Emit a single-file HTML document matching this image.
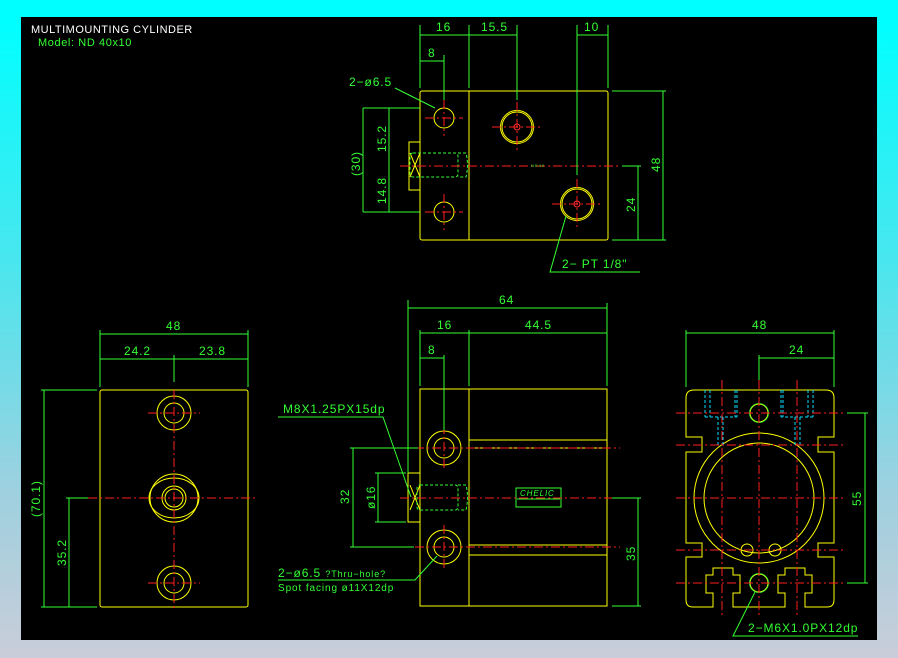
<!DOCTYPE html>
<html><head><meta charset="utf-8"><style>
html,body{margin:0;padding:0}
body{width:898px;height:658px;background:linear-gradient(180deg,#00ffff 0%,#00ffff 3%,#4ae6ee 40%,#9fd0df 75%,#c9cdd9 100%);position:relative;overflow:hidden}
svg{position:absolute;left:0;top:0}
text{font-family:"Liberation Sans",sans-serif;font-size:12px;fill:#33ff33;letter-spacing:0.9px}
</style></head><body>
<svg width="898" height="658" viewBox="0 0 898 658">
<rect x="21" y="17" width="856" height="623" fill="#000"/>
<text x="31" y="33" style="fill:#fff;font-size:11px;letter-spacing:0.5px">MULTIMOUNTING  CYLINDER</text>
<text x="38" y="46" style="font-size:11px;letter-spacing:0.6px">Model:  ND  40x10</text>

<!-- ===== TOP VIEW ===== -->
<g fill="none" stroke="#ffff00" stroke-width="1">
<rect x="420" y="91" width="188" height="149" rx="2"/>
<line x1="469" y1="91" x2="469" y2="240"/>
<circle cx="444" cy="118" r="10"/>
<circle cx="444" cy="212" r="10"/>
<circle cx="517" cy="127" r="15"/><circle cx="517" cy="127" r="16.5"/><circle cx="517" cy="127" r="3" stroke="#ff3030"/>
<circle cx="577" cy="204" r="15"/><circle cx="577" cy="204" r="16.5"/><circle cx="577" cy="204" r="3" stroke="#ff3030"/>
<rect x="409" y="142" width="11" height="48"/>
<path d="M410,153 L420,177 M410,177 L420,153"/>
</g>
<g fill="none" stroke="#33ff33" stroke-dasharray="3,2">
<rect x="410" y="153" width="48" height="24" rx="3"/>
<path d="M458,153 H466 Q469,165 466,177 H458"/>
</g>
<g stroke="#ff2020" stroke-dasharray="9,3,2,3" fill="none">
<line x1="400" y1="166" x2="620" y2="166"/>
<line x1="425" y1="118" x2="463" y2="118"/><line x1="444" y1="100" x2="444" y2="136"/>
<line x1="425" y1="212" x2="463" y2="212"/><line x1="444" y1="194" x2="444" y2="230"/>
<line x1="492" y1="127" x2="542" y2="127"/><line x1="517" y1="102" x2="517" y2="152"/>
<line x1="552" y1="204" x2="602" y2="204"/><line x1="577" y1="179" x2="577" y2="229"/>
</g>
<g stroke="#33ff33" fill="none">
<line x1="420" y1="25" x2="420" y2="88"/><line x1="469" y1="25" x2="469" y2="88"/>
<line x1="517" y1="25" x2="517" y2="100"/><line x1="577" y1="25" x2="577" y2="175"/><line x1="608" y1="25" x2="608" y2="88"/>
<line x1="420" y1="35" x2="517" y2="35"/><line x1="577" y1="35" x2="608" y2="35"/>
<line x1="420" y1="61" x2="444" y2="61"/><line x1="444" y1="55" x2="444" y2="100"/>
<line x1="363" y1="108" x2="420" y2="108"/><line x1="363" y1="212" x2="420" y2="212"/>
<line x1="363" y1="108" x2="363" y2="212"/><line x1="389" y1="108" x2="389" y2="212"/>
<line x1="612" y1="91" x2="666" y2="91"/><line x1="612" y1="240" x2="666" y2="240"/>
<line x1="622" y1="166" x2="641" y2="166"/>
<line x1="663" y1="91" x2="663" y2="240"/><line x1="638" y1="166" x2="638" y2="240"/>
<polyline points="395,88 435,108"/>
<polyline points="640,272 550,272 566,216"/>
</g>
<text x="436" y="31">16</text><text x="481" y="31">15.5</text><text x="584" y="31">10</text>
<text x="428" y="57">8</text>
<text x="349" y="86">2−ø6.5</text>
<text x="562" y="268">2−  PT 1/8"</text>
<text transform="translate(360,176) rotate(-90)">(30)</text>
<text transform="translate(386,152) rotate(-90)">15.2</text>
<text transform="translate(386,204) rotate(-90)">14.8</text>
<text transform="translate(660,172) rotate(-90)">48</text>
<text transform="translate(635,212) rotate(-90)">24</text>
<text x="531" y="167" style="font-size:4px">ND40</text>

<!-- ===== FRONT VIEW ===== -->
<g fill="none" stroke="#ffff00">
<rect x="420" y="389" width="187" height="217"/>
<line x1="469" y1="389" x2="469" y2="606"/>
<circle cx="444" cy="448" r="17"/><circle cx="444" cy="448" r="10"/>
<circle cx="444" cy="547" r="17"/><circle cx="444" cy="547" r="10"/>
<line x1="469" y1="440" x2="607" y2="440"/><line x1="469" y1="448" x2="607" y2="448"/>
<line x1="469" y1="545" x2="607" y2="545"/><line x1="469" y1="555" x2="607" y2="555"/>
<rect x="408" y="473" width="12" height="49"/>
<path d="M410,485 L420,510 M410,510 L420,485"/>
</g>
<g fill="none" stroke="#33ff33" stroke-dasharray="3,2">
<rect x="417" y="485" width="41" height="25" rx="3"/>
<path d="M458,485 H466 Q469,497 466,510 H458"/>
</g>
<rect x="516" y="488" width="45" height="19" fill="none" stroke="#33ff33"/>
<text x="520" y="496" style="font-size:8px;font-style:italic">CHELIC</text>
<line x1="517" y1="499" x2="560" y2="499" stroke="#33ff33"/>
<g stroke="#ff2020" stroke-dasharray="9,3,2,3" fill="none">
<line x1="400" y1="498" x2="620" y2="498"/>
<line x1="415" y1="448" x2="620" y2="448"/><line x1="444" y1="425" x2="444" y2="470"/>
<line x1="415" y1="547" x2="620" y2="547"/><line x1="444" y1="525" x2="444" y2="570"/>
</g>
<g stroke="#33ff33" fill="none">
<line x1="408" y1="300" x2="408" y2="473"/><line x1="420" y1="330" x2="420" y2="386"/>
<line x1="469" y1="330" x2="469" y2="386"/><line x1="607" y1="303" x2="607" y2="386"/>
<line x1="444" y1="355" x2="444" y2="430"/>
<line x1="408" y1="308" x2="607" y2="308"/><line x1="420" y1="333" x2="607" y2="333"/>
<line x1="420" y1="358" x2="444" y2="358"/>
<line x1="350" y1="448" x2="418" y2="448"/><line x1="350" y1="547" x2="414" y2="547"/>
<line x1="353" y1="448" x2="353" y2="547"/>
<line x1="375" y1="473" x2="406" y2="473"/><line x1="375" y1="522" x2="406" y2="522"/>
<line x1="378" y1="473" x2="378" y2="522"/>
<line x1="612" y1="498" x2="641" y2="498"/><line x1="612" y1="606" x2="641" y2="606"/>
<line x1="638" y1="498" x2="638" y2="606"/>
<polyline points="278,417 383,417 411,497"/>
<polyline points="278,580 415,580 437,556"/>
</g>
<text x="499" y="304">64</text><text x="437" y="329">16</text><text x="525" y="329">44.5</text>
<text x="428" y="354">8</text>
<text x="283" y="413">M8X1.25PX15dp</text>
<text x="278" y="577">2−ø6.5 <tspan style="font-size:9px">?Thru−hole?</tspan></text>
<text x="278" y="591" style="font-size:10px">Spot facing  ø11X12dp</text>
<text transform="translate(349,504) rotate(-90)">32</text>
<text transform="translate(375,509) rotate(-90)">ø16</text>
<text transform="translate(635,561) rotate(-90)">35</text>

<!-- ===== LEFT VIEW ===== -->
<g fill="none" stroke="#ffff00">
<rect x="100" y="390" width="148" height="217" rx="2"/>
<circle cx="174" cy="413" r="17"/><circle cx="174" cy="413" r="10"/>
<circle cx="174" cy="583" r="17"/><circle cx="174" cy="583" r="10"/>
<circle cx="174" cy="498" r="24"/><ellipse cx="174" cy="498" rx="25" ry="20"/>
<circle cx="174" cy="498" r="12"/><circle cx="174" cy="498" r="9"/>
</g>
<g stroke="#ff2020" stroke-dasharray="9,3,2,3" fill="none">
<line x1="88" y1="498" x2="258" y2="498"/><line x1="174" y1="390" x2="174" y2="610"/>
<line x1="148" y1="413" x2="200" y2="413"/><line x1="148" y1="583" x2="200" y2="583"/>
</g>
<g stroke="#33ff33" fill="none">
<line x1="100" y1="330" x2="100" y2="387"/><line x1="248" y1="330" x2="248" y2="387"/>
<line x1="174" y1="355" x2="174" y2="382"/>
<line x1="100" y1="334" x2="248" y2="334"/><line x1="100" y1="359" x2="248" y2="359"/>
<line x1="41" y1="390" x2="97" y2="390"/><line x1="41" y1="607" x2="97" y2="607"/>
<line x1="44" y1="390" x2="44" y2="607"/>
<line x1="66" y1="498" x2="88" y2="498"/><line x1="69" y1="498" x2="69" y2="607"/>
</g>
<text x="166" y="330">48</text><text x="124" y="355">24.2</text><text x="199" y="355">23.8</text>
<text transform="translate(40,517) rotate(-90)">(70.1)</text>
<text transform="translate(66,566) rotate(-90)">35.2</text>

<!-- ===== RIGHT VIEW ===== -->
<g fill="none" stroke="#ffff00">
<path d="M694,390 H826 Q834,390 834,398 V437 H818 V452 H834 V543 H818 V557 H834 V600 Q834,607 827,607 H805 V593 H812 V575 H805 V568 H785 V575 H778 V593 H785 V607 H733 V593 H740 V575 H733 V568 H713 V575 H706 V593 H713 V607 H693 Q686,607 686,600 V557 H702 V543 H686 V452 H702 V437 H686 V398 Q686,390 694,390 Z"/>
<circle cx="759" cy="498" r="65"/><circle cx="759" cy="498" r="55"/>
<circle cx="747" cy="550" r="6"/><circle cx="775" cy="550" r="6"/>
</g>
<g fill="none" stroke="#ffff00"><circle cx="759" cy="413" r="9"/><circle cx="759" cy="583" r="9"/></g>
<g fill="none" stroke="#33ff33" stroke-width="0.8"><circle cx="759" cy="413" r="9.5"/><circle cx="759" cy="583" r="9.5"/></g>
<g fill="none" stroke="#00e0ff" stroke-dasharray="3,2">
<path d="M705,390 V417 M710,390 V417 M735,390 V417 M737,390 V417 M705,417 H737 M718,417 V447 M723,417 V447"/>
<path d="M813,390 V417 M808,390 V417 M783,390 V417 M781,390 V417 M813,417 H781 M800,417 V447 M795,417 V447"/>
</g>
<g stroke="#ff2020" stroke-dasharray="9,3,2,3" fill="none">
<line x1="676" y1="413" x2="846" y2="413"/><line x1="676" y1="445" x2="846" y2="445"/>
<line x1="676" y1="498" x2="846" y2="498"/><line x1="676" y1="550" x2="846" y2="550"/>
<line x1="676" y1="583" x2="846" y2="583"/>
<line x1="759" y1="380" x2="759" y2="615"/>
<line x1="722" y1="380" x2="722" y2="615"/><line x1="797" y1="380" x2="797" y2="615"/>
</g>
<g stroke="#33ff33" fill="none">
<line x1="686" y1="330" x2="686" y2="387"/><line x1="834" y1="330" x2="834" y2="387"/>
<line x1="759" y1="355" x2="759" y2="380"/>
<line x1="686" y1="333" x2="834" y2="333"/><line x1="759" y1="358" x2="834" y2="358"/>
<line x1="847" y1="413" x2="868" y2="413"/><line x1="847" y1="583" x2="868" y2="583"/>
<line x1="865" y1="413" x2="865" y2="583"/>
<polyline points="858,636 733,636 755,592"/>
</g>
<text x="752" y="329">48</text><text x="789" y="354">24</text>
<text transform="translate(861,506) rotate(-90)">55</text>
<text x="748" y="632">2−M6X1.0PX12dp</text>
</svg>
</body></html>
